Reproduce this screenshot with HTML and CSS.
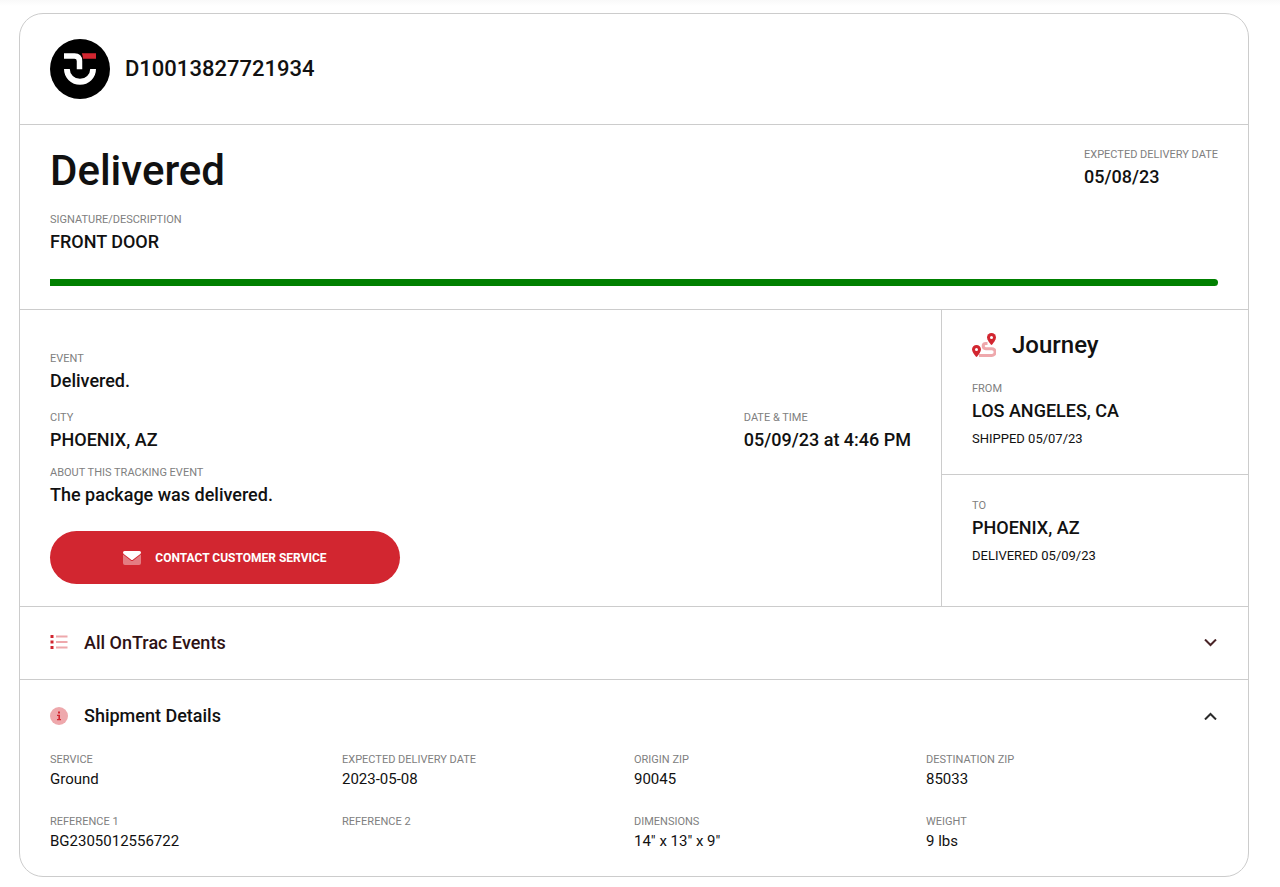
FILE: index.html
```html
<!DOCTYPE html>
<html lang="en">
<head>
<meta charset="utf-8">
<meta name="viewport" content="width=device-width, initial-scale=1">
<title>Tracking D10013827721934</title>
<link rel="stylesheet" href="styles.css">
</head>
<body>
<main class="card">
  <header class="card-header">
    <svg class="logo" viewBox="0 0 60 60" aria-hidden="true">
      <circle cx="30" cy="30" r="30" fill="#000"/>
      <path d="M14 17H24.500Q29.500 17 29.500 22V30.300" fill="none" stroke="#fff" stroke-width="5.500"/>
      <path d="M31.800 14.200H46V19.800H33Q32.800 16.500 31.800 14.200Z" fill="#d22630"/>
      <path d="M14 30H19.800A10.200 9.800 0 0 0 40.200 30H46A16 15.800 0 0 1 14 30Z" fill="#fff"/>
    </svg>
    <span class="tracking-number">D10013827721934</span>
  </header>

  <section class="status">
    <div class="status-top">
      <div>
        <h1 class="status-title">Delivered</h1>
        <dl class="field"><dt class="label">SIGNATURE/DESCRIPTION</dt><dd class="value">FRONT DOOR</dd></dl>
      </div>
      <dl class="field"><dt class="label">EXPECTED DELIVERY DATE</dt><dd class="value">05/08/23</dd></dl>
    </div>
    <div class="progress"></div>
  </section>

  <div class="split">
    <section class="event">
      <dl class="field"><dt class="label">EVENT</dt><dd class="value">Delivered.</dd></dl>
      <div class="event-row">
        <dl class="field"><dt class="label">CITY</dt><dd class="value">PHOENIX, AZ</dd></dl>
        <dl class="field"><dt class="label">DATE &amp; TIME</dt><dd class="value">05/09/23 at 4:46 PM</dd></dl>
      </div>
      <dl class="field"><dt class="label">ABOUT THIS TRACKING EVENT</dt><dd class="value">The package was delivered.</dd></dl>
      <button class="contact" type="button">
        <svg class="icon-mail" viewBox="0 0 18 14" aria-hidden="true">
          <path d="M0 3.500L8 9.700Q9 10.400 10 9.700L18 3.500V12Q18 14 16 14H2Q0 14 0 12Z" fill="#fff" opacity=".4"/>
          <path d="M1.500 0H16.500Q18 0 18 1.500Q18 2.300 17.300 2.900L9.800 8.700Q9 9.200 8.200 8.700L.700 2.900Q0 2.300 0 1.500Q0 0 1.500 0Z" fill="#fff"/>
        </svg>
        CONTACT CUSTOMER SERVICE
      </button>
    </section>

    <aside class="journey">
      <section class="leg leg-from">
        <h2 class="journey-title">
          <svg class="icon-route" viewBox="0 0 24 24" aria-hidden="true">
            <path d="M15.500 10.500H13.800A2.600 2.600 0 0 0 13.800 15.700H19.800A3.300 3.300 0 0 1 19.800 22.400H7" fill="none" stroke="#eea8ac" stroke-width="3"/>
            <path d="M19.500 0A4.500 4.500 0 0 1 24 4.500C24 6.600 21.500 9.900 20.200 11.600Q19.500 12.300 18.800 11.600C17.500 9.900 15 6.600 15 4.500A4.500 4.500 0 0 1 19.500 0Z" fill="#d22630"/>
            <circle cx="19.500" cy="4.500" r="1.500" fill="#fff"/>
            <path d="M4.500 12A4.500 4.500 0 0 1 9 16.500C9 18.600 6.500 21.900 5.200 23.600Q4.500 24.300 3.800 23.600C2.500 21.900 0 18.600 0 16.500A4.500 4.500 0 0 1 4.500 12Z" fill="#d22630"/>
            <circle cx="4.500" cy="16.500" r="1.500" fill="#fff"/>
          </svg>
          Journey
        </h2>
        <dl class="field"><dt class="label">FROM</dt><dd class="value">LOS ANGELES, CA</dd></dl>
        <p class="leg-note">SHIPPED 05/07/23</p>
      </section>
      <section class="leg leg-to">
        <dl class="field"><dt class="label">TO</dt><dd class="value">PHOENIX, AZ</dd></dl>
        <p class="leg-note">DELIVERED 05/09/23</p>
      </section>
    </aside>
  </div>

  <details class="panel">
    <summary class="panel-head panel-head-warm">
      <svg class="icon-panel" viewBox="0 0 18 18" aria-hidden="true">
        <path d="M6 2.500H17.500M6 8H17.500M6 13.500H17.500" stroke="#eea8ac" stroke-width="2"/>
        <path d="M.500 1H3.500V4H.500ZM.500 6.500H3.500V9.500H.500ZM.500 12H3.500V15H.500Z" fill="#d22630"/>
      </svg>
      <span class="panel-title">All OnTrac Events</span>
      <svg class="chevron" viewBox="0 0 14 8" aria-hidden="true"><path d="M1 .500L6.500 6L12 .500" fill="none" stroke="#4a2427" stroke-width="2"/></svg>
    </summary>
  </details>

  <details class="panel" open>
    <summary class="panel-head">
      <svg class="icon-panel" viewBox="0 0 18 18" aria-hidden="true">
        <circle cx="9" cy="9" r="9" fill="#eea8ac"/>
        <path d="M8 4.500H10V6.500H8ZM7 7.800H10V12H11V13.200H7V12H8.400V9H7Z" fill="#d22630"/>
      </svg>
      <span class="panel-title">Shipment Details</span>
      <svg class="chevron" viewBox="0 0 14 8" aria-hidden="true"><path d="M1 7.500L6.500 2L12 7.500" fill="none" stroke="#2b2b2b" stroke-width="2"/></svg>
    </summary>
    <dl class="details-grid">
      <div><dt class="label">SERVICE</dt><dd class="detail">Ground</dd></div>
      <div><dt class="label">EXPECTED DELIVERY DATE</dt><dd class="detail">2023-05-08</dd></div>
      <div><dt class="label">ORIGIN ZIP</dt><dd class="detail">90045</dd></div>
      <div><dt class="label">DESTINATION ZIP</dt><dd class="detail">85033</dd></div>
      <div><dt class="label">REFERENCE 1</dt><dd class="detail">BG2305012556722</dd></div>
      <div><dt class="label">REFERENCE 2</dt><dd class="detail"></dd></div>
      <div><dt class="label">DIMENSIONS</dt><dd class="detail">14" x 13" x 9"</dd></div>
      <div><dt class="label">WEIGHT</dt><dd class="detail">9 lbs</dd></div>
    </dl>
  </details>
</main>
</body>
</html>
```

FILE: styles.css
```css
* {
  box-sizing: border-box;
}

body {
  margin: 0;
  padding: 13px 31px 10px 19px;
  background: linear-gradient(#f9f9f9, #fff 6px) no-repeat #fff;
  color: #111;
  font-family: Roboto, "Liberation Sans", sans-serif;
}

h1, h2, p, dl, dd {
  margin: 0;
}

.card {
  border: 1px solid #ccc;
  border-radius: 24px;
  overflow: hidden;
  background: #fff;
}

.card-header {
  display: flex;
  align-items: center;
  gap: 15px;
  padding: 25px 30px;
}

.logo {
  width: 60px;
  height: 60px;
}

.tracking-number {
  font-size: 22px;
  font-weight: 500;
  line-height: 28px;
}

.label {
  color: #808080;
  font-size: 11px;
  line-height: 18px;
}

.value {
  margin-top: 1px;
  font-size: 18px;
  font-weight: 500;
  line-height: 24px;
}

.status {
  border-top: 1px solid #ccc;
  padding: 21px 30px 23px;
}

.status-top {
  display: flex;
  justify-content: space-between;
  align-items: flex-start;
}

.status-title {
  margin-bottom: 15px;
  font-size: 42px;
  font-weight: 500;
  line-height: 50px;
}

.progress {
  height: 7px;
  margin-top: 25px;
  border-radius: 0 4px 4px 0;
  background: #008000;
}

.split {
  display: grid;
  grid-template-columns: 3fr 1fr;
  border-top: 1px solid #ccc;
}

.event {
  padding: 40px 30px 22px;
}

.event-row {
  display: flex;
  justify-content: space-between;
  margin: 16px 0 12px;
}

.contact {
  display: flex;
  align-items: center;
  justify-content: center;
  gap: 14px;
  width: 350px;
  max-width: 100%;
  height: 53px;
  margin-top: 24px;
  border: 0;
  border-radius: 27px;
  background: #d22630;
  color: #fff;
  font-family: inherit;
  font-size: 12px;
  font-weight: 700;
}

.icon-mail {
  width: 18px;
  height: 14px;
}

.journey {
  border-left: 1px solid #ccc;
}

.leg {
  padding: 20px 30px 26px;
}

.leg-to {
  border-top: 1px solid #ccc;
  padding-top: 22px;
}

.journey-title {
  display: flex;
  align-items: center;
  gap: 16px;
  margin-bottom: 20px;
  font-size: 24px;
  font-weight: 500;
  line-height: 30px;
}

.icon-route {
  width: 24px;
  height: 24px;
}

.leg-note {
  margin-top: 7px;
  font-size: 13px;
  line-height: 18px;
}

.panel {
  border-top: 1px solid #ccc;
}

.panel-head {
  display: flex;
  align-items: center;
  gap: 16px;
  padding: 24px 30px;
  list-style: none;
  cursor: pointer;
}

.panel[open] .panel-head {
  padding-bottom: 23px;
}

.panel-head-warm {
  color: #2e1214;
}

.panel-title {
  flex: 1;
  font-size: 18px;
  font-weight: 500;
  line-height: 24px;
}

.icon-panel {
  width: 18px;
  height: 18px;
}

.chevron {
  width: 14px;
  height: 8px;
}

.details-grid {
  display: grid;
  grid-template-columns: repeat(4, 1fr);
  row-gap: 24px;
  padding: 0 30px 25px;
}

.detail {
  min-height: 20px;
  font-size: 15px;
  line-height: 20px;
}
```
